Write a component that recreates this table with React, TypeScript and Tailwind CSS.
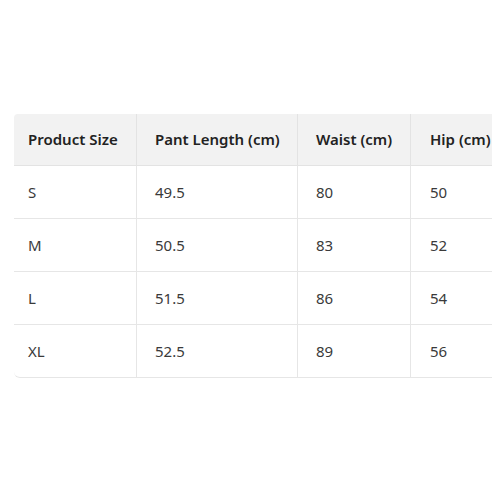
import React from "react";

const rows = [
  ["S", "49.5", "80", "50"],
  ["M", "50.5", "83", "52"],
  ["L", "51.5", "86", "54"],
  ["XL", "52.5", "89", "56"],
];
const headers = ["Product Size", "Pant Length (cm)", "Waist (cm)", "Hip (cm)"];
const widths = ["w-[122px]", "w-[161px]", "w-[113px]", "w-[120px]"];
const pads = ["pl-[14px]", "pl-[18px]", "pl-[18px]", "pl-[19px]"];

export default function App() {
  return (
    <div
      className="w-[492px] h-[492px] overflow-hidden bg-white text-[#3a3a3a]"
      style={{ fontFamily: '"Noto Sans", "Open Sans", sans-serif' }}
    >
      <div className="pt-[114px] pl-[14px]">
        <table className="border-separate border-spacing-0 text-[15px] w-[516px] table-fixed">
          <thead>
            <tr className="bg-[#f2f2f2]">
              {headers.map((h, i) => (
                <th
                  key={h}
                  className={`${widths[i]} ${pads[i]} h-[52px] text-left font-semibold text-[#222222] whitespace-nowrap border-b border-[#e3e3e3] ${i > 0 ? "border-l" : ""} ${i === 0 ? "rounded-tl-[4px]" : ""}`}
                >
                  {h}
                </th>
              ))}
            </tr>
          </thead>
          <tbody>
            {rows.map((r, ri) => (
              <tr key={ri}>
                {r.map((c, i) => (
                  <td
                    key={i}
                    className={`${pads[i]} h-[53px] text-left font-normal border-b border-[#e6e6e6] ${i > 0 ? "border-l" : ""} ${ri === rows.length - 1 && i === 0 ? "rounded-bl-[6px]" : ""}`}
                  >
                    {c}
                  </td>
                ))}
              </tr>
            ))}
          </tbody>
        </table>
      </div>
    </div>
  );
}
